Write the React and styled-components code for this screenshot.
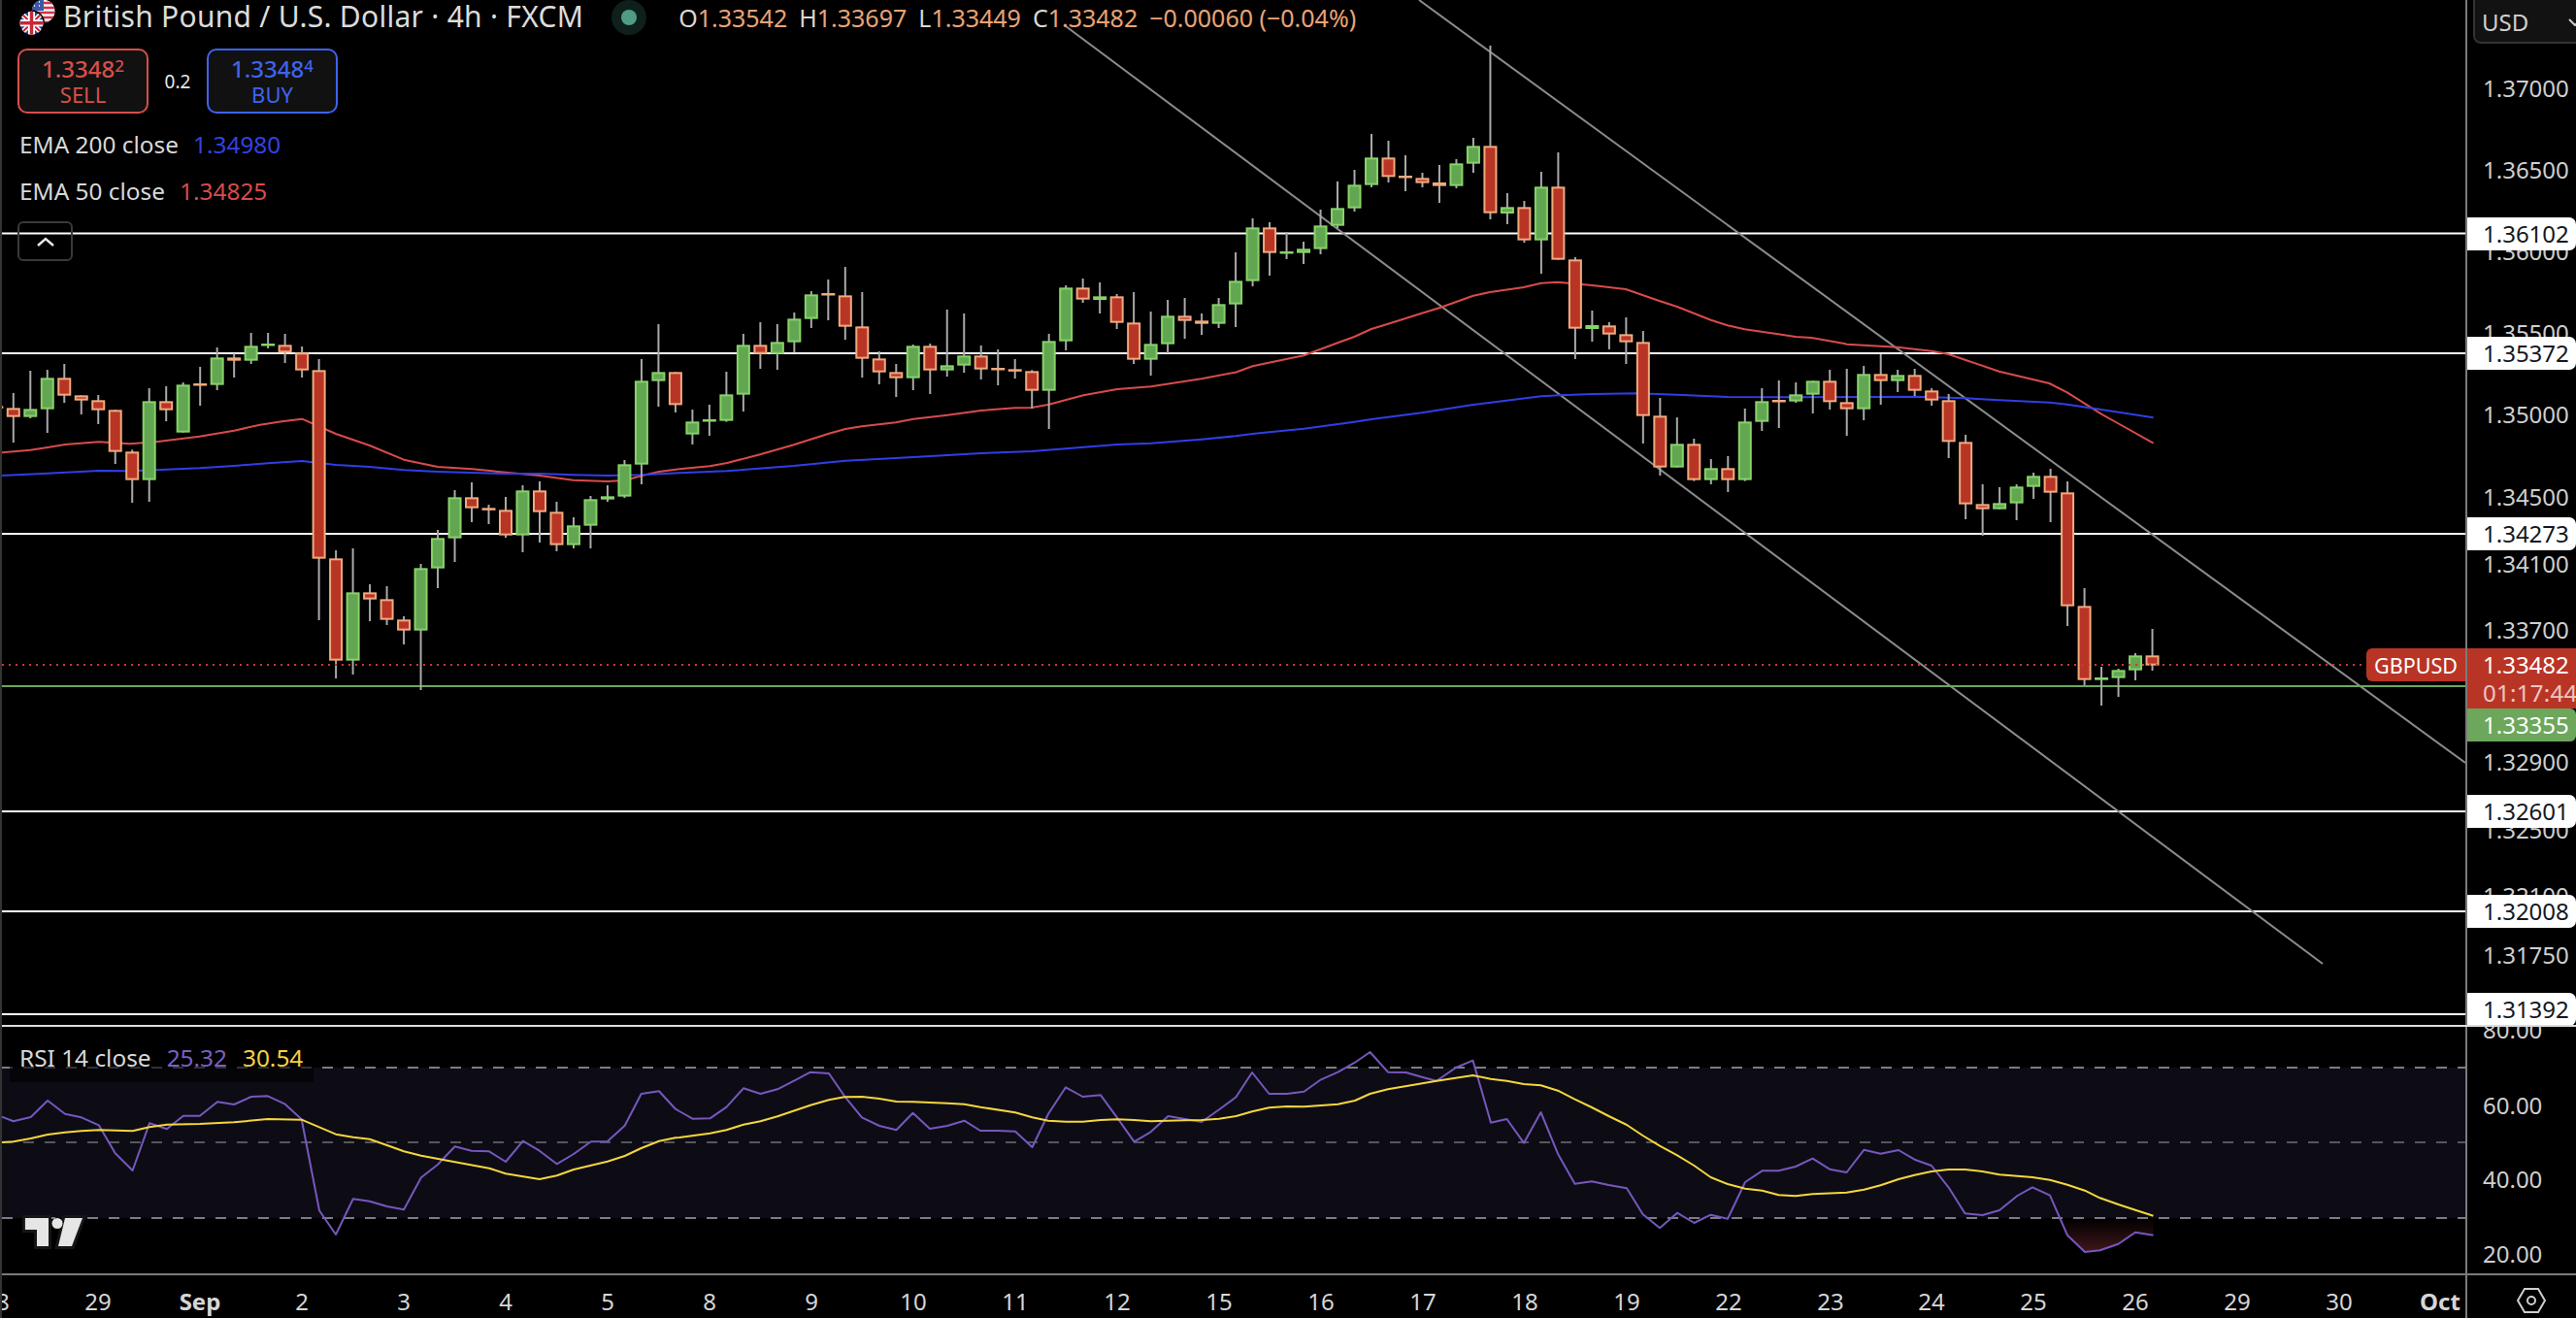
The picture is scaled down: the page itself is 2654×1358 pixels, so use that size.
import React from "react";
import styled, { createGlobalStyle } from "styled-components";

const FONT = `"Noto Sans", "Open Sans", sans-serif`;

const GlobalStyle = createGlobalStyle`
  html, body { margin: 0; padding: 0; background: #000; }
  body { font-family: ${FONT}; }
`;

/* ---------- data: traced from the chart, [wickTop, bodyTop, bodyBottom, wickBottom, up] ---------- */
const seg = (off, rows) => rows.map(([a, b, c, d, u]) => [off + a / 3, off + b / 3, off + c / 3, off + d / 3, u]);
const candles = [
  ...seg(320, [
    [240,295,301,360,0],
    [255,301,329,408,0],[186,304,329,333,1],[183,208,305,378,1],[165,208,263,285,0],[262,262,278,321,0],
    [261,277,308,351,0],[306,307,437,474,0],[430,436,524,594,0],[240,280,524,591,1],[234,280,308,342,0],
    [222,229,377,377,1],[174,225,231,294,0],[114,145,230,246,1],[132,145,155,207,0],[69,109,155,165,1],
    [69,102,107,117,1],[72,106,130,162,0],[111,130,185,207,0],[150,184,767,957,0],[741,766,1082,1137,0],
    [735,871,1082,1125,1],[846,871,893,960,0],[852,892,956,972,0],[945,955,989,1032,0],[783,796,989,1173,1],
    [678,703,797,858,1],[555,577,704,777,1],[531,577,611,654,0],[600,610,617,660,0],[576,616,695,702,0],
    [540,556,695,747,1],[528,556,623,717,0],[591,622,725,744,0],[639,664,725,735,1],[573,583,665,735,1],
    [540,574,584,591,1],[462,475,575,579,1],[150,217,476,537,1],[42,190,218,297,1],[190,190,292,315,0],
  ]),
  ...seg(220, [
    [606,643,683,714,1],[591,636,641,687,1],[489,559,641,644,1],[372,406,560,612,1],[336,406,434,480,0],
    [342,397,434,483,1],[306,325,398,430,1],[240,250,326,354,1],[204,246,251,330,0],[165,253,350,390,0],
    [243,349,449,507,0],[426,448,491,528,0],[465,490,509,567,0],[405,409,509,546,1],[402,409,485,558,0],
    [297,469,485,504,1],[309,439,470,492,1],[408,439,482,513,0],[420,477,483,531,0],[450,481,485,510,0],
    [484,487,548,603,0],[372,394,548,666,1],[222,229,395,423,1],[201,229,266,276,0],[213,256,267,309,1],
    [249,256,338,357,0],[243,337,452,465,0],[303,403,452,501,1],[267,316,404,432,1],[261,316,332,387,0],
    [309,331,341,375,0],[261,280,341,354,1],[120,208,281,351,1],[15,43,209,225,1],
  ]),
  ...seg(30, [
    [597,613,692,762,0],[627,687,692,711,1],[657,679,692,726,1],[558,607,680,696,1],[471,553,608,615,1],
    [435,481,554,564,1],[324,397,482,489,1],[345,397,457,474,0],[390,453,459,501,0],[444,460,476,489,0],
    [420,474,485,537,0],[402,415,485,492,1],[336,361,416,444,1],[51,361,569,588,0],[507,550,570,603,1],
    [531,550,653,660,0],[441,487,653,756,1],[381,487,713,713,0],[705,712,926,1020,0],[870,915,927,966,1],
    [906,916,944,990,0],[891,943,968,1035,0],[933,967,1196,1281,0],
  ]),
  ...seg(350, [
    [180,235,395,420,0],[240,322,395,395,1],[306,322,434,437,0],[369,397,434,447,1],[360,397,434,471,0],
    [213,253,434,437,1],[150,190,254,282,1],[126,186,191,273,0],[132,169,191,195,1],[127,127,170,228,1],
    [93,127,193,216,0],[90,193,215,297,0],[81,106,215,249,1],[45,106,128,201,0],[93,109,128,162,1],
    [90,109,158,174,0],[150,157,188,204,0],[168,187,316,366,0],[294,316,509,555,0],[447,508,524,606,0],
    [456,505,524,524,1],[447,454,506,558,1],[411,421,455,492,1],[399,421,473,564,0],[438,472,824,885,0],
    [768,823,1052,1068,0],[1011,1044,1052,1131,1],[1017,1021,1046,1104,1],[969,976,1022,1053,1],[894,976,1007,1023,0],
  ]),
];
const candleX = (index) => 13.8 + 17.49 * (index - 1);

const trace = (x0, sx, y0, flat) => {
  const out = [];
  for (let i = 0; i < flat.length; i += 2) out.push(`${(x0 + flat[i] / sx).toFixed(1)},${(y0 + flat[i + 1] / 3).toFixed(1)}`);
  return out.join(" ");
};

const ema50 = [
  trace(0, 2.24, 320, [4,439,70,431,110,423,150,414,228,406,300,412,360,406,460,389,540,371,600,353,650,343,697,335,775,381,853,417,932,461,1010,483,1090,490,1167,500,1245,510,1323,524,1402,528,1442,525,1480,511,1521,498,1568,490]),
  trace(700, 2.24, 220, [70,781,110,771,188,744,264,715,345,680,383,666,421,658,499,646,540,635,618,623,696,609,775,601,813,600,853,590,932,562,1010,543,1088,535,1205,511,1283,491,1323,472]),
  trace(1300, 2.613, 30, [0,1036,113,1009,204,970,249,951,295,927,340,911,431,878,478,862,569,824,614,813,705,798,752,785,797,782,890,792,980,804,1070,840,1118,858,1209,899,1254,916,1300,928,1390,943,1437,951,1480,954,1568,972]),
  trace(1700, 2.613, 350, [530,14,666,23,758,35,802,44,850,63,940,98,1075,135,1123,163,1215,230,1259,258,1355,320]),
].join(" ");

const ema200 = [
  trace(0, 2.24, 320, [4,510,110,503,228,495,300,496,385,491,461,487,540,480,618,472,697,465,775,477,853,483,932,493,1010,498,1167,504,1245,504,1323,508,1402,510,1480,508,1568,502]),
  trace(700, 2.24, 220, [110,796,264,780,383,764,499,756,540,753,696,741,813,735,891,727,1010,714,1088,710,1205,698,1283,688,1323,681]),
  trace(1300, 2.613, 30, [0,1248,113,1235,249,1214,295,1206,431,1186,569,1161,752,1135,800,1132,890,1128,1010,1126]),
  trace(1700, 2.613, 350, [0,167,73,170,209,177,392,178,575,177,713,176,850,181,940,187,1076,194,1123,200,1215,216,1355,241]),
].join(" ");

const rsi = [
  trace(0, 2.24, 1040, [4,332,31,346,71,333,110,282,150,323,188,334,228,358,266,445,306,498,345,352,385,370,423,329,461,329,502,286,540,294,580,270,618,268,658,293,696,340,737,622,775,696,815,586,853,593,893,609,932,619,972,520,1010,480,1050,424,1088,437,1129,439,1167,471,1207,407,1245,437,1285,478,1324,447,1364,409,1402,408,1442,359,1480,261,1521,253,1559,308]),
  trace(700, 2, 1060, [0,255,27,278,63,277,97,242,132,184,167,201,202,187,237,160,270,134,308,138,340,208,376,274,412,300,447,313,481,260,516,309,552,300,587,284,620,315,655,315,692,317,727,366,760,263,796,181,831,210,868,205,902,275,937,349,971,319,1007,270,1042,279,1076,288,1112,250,1147,211,1180,135,1215,201,1252,201,1287,194,1322,157,1357,134,1392,104,1423,72,1460,134,1497,135,1530,149]),
  trace(1480, 2, 1060, [0,161,40,120,75,98,112,290,145,279,180,353,215,258,250,386,285,479,320,472,355,483,392,493,425,573,460,616,496,569,531,600,565,575,600,587,636,474,671,439,705,439,740,426,775,401,810,434,845,444,881,374,915,386,952,375,985,404,1020,423,1055,490,1089,571,1125,576,1160,561,1197,516,1228,490,1264,515,1300,638,1336,690,1367,685,1405,665,1440,629,1477,638]),
].join(" ");

const rsiMa = [
  trace(0, 2.24, 1040, [4,411,31,409,71,399,110,387,150,380,188,376,228,373,306,376,345,364,385,356,461,354,540,349,618,339,696,341,775,386,815,395,853,401,893,420,932,439,972,452,1050,472,1129,491,1167,508,1245,525,1285,514,1324,495,1402,470,1442,453,1480,429,1521,407,1559,397]),
  trace(700, 2, 1060, [0,336,63,323,97,313,132,296,167,286,202,271,270,236,308,220,340,211,376,210,412,216,447,225,481,226,552,230,587,233,620,242,692,259,727,274,760,284,796,287,831,287,868,282,902,280,937,282,971,286,1042,283,1076,282,1112,278,1147,270,1180,256,1215,244,1252,240,1287,241,1357,233,1392,222,1423,201,1460,187]),
  trace(1480, 2, 1060, [0,161,75,144,112,155,145,161,180,171,215,175,250,191,285,218,320,243,355,270,392,297,425,330,460,362,496,391,531,423,565,459,600,480,636,494,671,500,705,514,740,517,775,511,845,506,881,497,915,484,952,465,985,452,1020,441,1055,435,1089,435,1125,441,1160,451,1228,459,1264,467,1300,482,1336,500,1367,523,1405,543,1440,560,1477,578]),
].join(" ");

const oversoldFill = trace(1480, 2, 1060, [1285,585,1300,638,1336,690,1367,685,1405,665,1440,629,1477,638,1477,585]);

const levels = [240.5, 364, 550, 836, 939, 1045];
const levelTags = [
  { top: 224, label: "1.36102" }, { top: 347, label: "1.35372" }, { top: 533, label: "1.34273" },
  { top: 819, label: "1.32601" }, { top: 922, label: "1.32008" }, { top: 1023, label: "1.31392" },
];
const priceTicks = [
  [91, "1.37000"], [175, "1.36500"], [259, "1.36000"], [343, "1.35500"], [427, "1.35000"], [512, "1.34500"],
  [581, "1.34100"], [649, "1.33700"], [785, "1.32900"], [855, "1.32500"], [923, "1.32100"], [984, "1.31750"],
];
const rsiTicks = [[3, "80.00"], [81, "60.00"], [157, "40.00"], [234, "20.00"]];
const dates = [
  [-4, "28"], [101, "29"], [206, "Sep", 1], [311, "2"], [416, "3"], [521, "4"], [626, "5"], [731, "8"], [836, "9"],
  [941, "10"], [1046, "11"], [1151, "12"], [1256, "15"], [1361, "16"], [1466, "17"], [1571, "18"], [1676, "19"],
  [1781, "22"], [1886, "23"], [1990, "24"], [2095, "25"], [2200, "26"], [2305, "29"], [2410, "30"], [2514, "Oct", 1],
];

/* ---------- layout ---------- */
const Page = styled.div`
  width: 2654px;
  height: 1358px;
  box-sizing: border-box;
  border-left: 2px solid #333;
  background: #000;
  overflow: hidden;
  display: grid;
  grid-template-columns: 2538px 2px 112px;
  grid-template-rows: 1056px 2px 254px 2px 44px;
  font-family: ${FONT};
`;
const Pane = styled.div`
  position: relative;
  overflow: hidden;
`;
const VerticalRule = styled.div`
  background: #7b7b7b;
`;
const PaneSeparator = styled.div`
  grid-column: 1 / -1;
  background: #dcdce4;
`;
const TimeRule = styled.div`
  grid-column: 1 / -1;
  background: #7b7b7b;
`;
const Plot = styled.svg`
  display: block;
`;

/* ---------- legend over the chart ---------- */
const Legend = styled.div`
  position: absolute;
  top: 0;
  left: 0;
  padding-left: 16px;
  display: flex;
  flex-direction: column;
  align-items: flex-start;
  color: #d8d8d8;
`;
const TitleRow = styled.div`
  height: 36px;
  display: flex;
  align-items: center;
  white-space: nowrap;
`;
const Flags = styled.svg`
  margin: 0 7px 0 2px;
  flex: none;
`;
const Title = styled.span`
  font-size: 30px;
  line-height: 36px;
  margin-top: -3px;
  letter-spacing: 0.27px;
  color: #dcdcdc;
`;
const StatusHalo = styled.span`
  width: 36px;
  height: 36px;
  margin: 0 33px 0 29px;
  border-radius: 50%;
  background: #0f1f1b;
  display: flex;
  align-items: center;
  justify-content: center;
`;
const StatusDot = styled.span`
  width: 16px;
  height: 16px;
  border-radius: 50%;
  background: #4f9c85;
`;
const Ohlc = styled.span`
  font-size: 25px;
  display: flex;
  gap: 12px;
`;
const OhlcLabel = styled.span`
  color: #d8d8d8;
`;
const OhlcValue = styled.span`
  color: #e9a476;
`;
const TradeRow = styled.div`
  margin-top: 14px;
  display: flex;
  align-items: center;
`;
const TradeButton = styled.div`
  width: 135px;
  height: 67px;
  box-sizing: border-box;
  border: 2px solid ${(p) => p.$color};
  border-radius: 10px;
  background: #111;
  color: ${(p) => p.$color};
  display: flex;
  flex-direction: column;
  align-items: center;
  justify-content: center;
  line-height: 26px;
`;
const TradePrice = styled.span`
  font-size: 24px;
  font-weight: 500;
`;
const Pip = styled.sup`
  font-size: 17px;
  line-height: 0;
  vertical-align: 6px;
`;
const TradeSide = styled.span`
  font-size: 22px;
`;
const Spread = styled.span`
  width: 60px;
  text-align: center;
  font-size: 19px;
  color: #e8e8e8;
`;
const IndicatorRow = styled.div`
  margin: ${(p) => (p.$first ? "16px" : "18px")} 0 0 2px;
  height: 30px;
  display: flex;
  align-items: center;
  gap: 15px;
  font-size: 24.4px;
  white-space: nowrap;
`;
const IndicatorValue = styled.span`
  color: ${(p) => p.$color};
`;
const CollapseButton = styled.div`
  margin-top: 17px;
  width: 57px;
  height: 41px;
  box-sizing: border-box;
  border: 2px solid #3a3a3a;
  border-radius: 6px;
  display: flex;
  align-items: center;
  justify-content: center;
`;
const RsiLegend = styled.div`
  position: absolute;
  top: 9px;
  left: 8px;
  width: 313px;
  height: 48px;
  box-sizing: border-box;
  padding: 0 0 4px 10px;
  background: rgba(0, 0, 0, 0.6);
  display: flex;
  align-items: center;
  gap: 16px;
  font-size: 24.4px;
  color: #d8d8d8;
  white-space: nowrap;
`;
const SymbolTag = styled.div`
  position: absolute;
  right: 0;
  top: 668px;
  width: 102px;
  height: 34px;
  border-radius: 6px 0 0 6px;
  background: #b83526;
  color: #fff;
  font-size: 21.5px;
  display: flex;
  align-items: center;
  justify-content: center;
`;

/* ---------- svg parts ---------- */
const Wick = styled.line`
  stroke: #a9a9a9;
  stroke-width: 2;
`;
const Body = styled.rect`
  fill: ${(p) => (p.$up ? "#63a652" : "#b83526")};
  stroke: ${(p) => (p.$up ? "#86d369" : "#f0aa7d")};
  stroke-width: 2;
`;
const LevelLine = styled.line`
  stroke: #fff;
  stroke-width: 2;
`;
const TrendLine = styled.line`
  stroke: #8c8c8c;
  stroke-width: 2;
`;
const SeriesLine = styled.polyline`
  fill: none;
  stroke: ${(p) => p.$color};
  stroke-width: 2;
  stroke-linejoin: round;
`;
const LastPriceLine = styled.line`
  stroke: #c93a2c;
  stroke-width: 2;
  stroke-dasharray: 2 5;
`;
const SupportLine = styled.line`
  stroke: #6ca75c;
  stroke-width: 2;
`;
const BandLine = styled.line`
  stroke: ${(p) => p.$color};
  stroke-width: 2;
  stroke-dasharray: 11 11;
`;

/* ---------- scales ---------- */
const Scale = styled.div`
  position: relative;
  overflow: hidden;
  background: #000;
  font-size: 24px;
  color: #cfcfcf;
`;
const Tick = styled.span.attrs((p) => ({ style: { top: p.$y } }))`
  position: absolute;
  left: 16px;
  line-height: 34px;
  transform: translateY(-50%);
`;
const LevelTag = styled.div.attrs((p) => ({ style: { top: p.$top } }))`
  position: absolute;
  left: 0;
  right: 0;
  height: 34px;
  padding-left: 16px;
  border-radius: 0 7px 7px 0;
  background: #fff;
  color: #131722;
  line-height: 34px;
`;
const LastPriceBlock = styled.div`
  position: absolute;
  top: 668px;
  left: 0;
  right: 0;
  height: 62px;
  padding-left: 16px;
  background: #b83526;
  color: #fff;
  line-height: 29px;
  display: flex;
  flex-direction: column;
  justify-content: center;
`;
const Countdown = styled.span`
  opacity: 0.72;
  letter-spacing: 0.3px;
`;
const SupportTag = styled.div`
  position: absolute;
  top: 730px;
  left: 0;
  right: 0;
  height: 34px;
  padding-left: 16px;
  border-radius: 0 6px 6px 0;
  background: #6ca75c;
  color: #fff;
  line-height: 34px;
`;
const CurrencyButton = styled.div`
  position: absolute;
  top: -2px;
  left: 6px;
  width: 120px;
  height: 47px;
  box-sizing: border-box;
  padding: 2px 0 0 7px;
  border: 2px solid #333;
  border-radius: 0 0 0 8px;
  background: #121212;
  color: #cfcfcf;
  display: flex;
  align-items: center;
  gap: 41px;
`;
const TimeAxis = styled.div`
  position: relative;
  overflow: hidden;
  font-size: 24px;
  color: #d6d6d6;
`;
const DateLabel = styled.span.attrs((p) => ({ style: { left: p.$x } }))`
  position: absolute;
  top: 0;
  line-height: 54px;
  transform: translateX(-50%);
  font-weight: ${(p) => (p.$bold ? 700 : 400)};
`;
const Corner = styled.div`
  display: flex;
  align-items: center;
  justify-content: center;
  padding: 8px 0 0 20px;
`;

const GbFlag = () => (
  <g clipPath="url(#gbClip)">
    <circle cx="12.5" cy="23.7" r="12" fill="#2a4b9b" />
    <path d="M0 12 L25 36 M25 12 L0 36" stroke="#fff" strokeWidth="5" />
    <path d="M0 12 L25 36 M25 12 L0 36" stroke="#c8283a" strokeWidth="2" />
    <path d="M12.5 10 V38 M0 23.7 H25" stroke="#fff" strokeWidth="7" />
    <path d="M12.5 10 V38 M0 23.7 H25" stroke="#c8283a" strokeWidth="3.5" />
  </g>
);

const UsFlag = () => (
  <g clipPath="url(#usClip)">
    <circle cx="24.7" cy="11.5" r="12" fill="#f4f4f4" />
    <path d="M12 3 H38 M12 8 H38 M12 13 H38 M12 18 H38 M12 23 H38" stroke="#d0344a" strokeWidth="2.6" />
    <rect x="12" y="-1" width="13" height="12" fill="#3b5aa8" />
    <path d="M15 2 h1 M20 2 h1 M15 6 h1 M20 6 h1" stroke="#fff" strokeWidth="1.5" />
  </g>
);

export default function App() {
  return (
    <>
      <GlobalStyle />
      <Page>
        <Pane>
          <Plot width="2538" height="1056" viewBox="2 0 2538 1056">
            {levels.map((y) => (
              <LevelLine key={y} x1="2" x2="2540" y1={y} y2={y} />
            ))}
            <TrendLine x1="1462" y1="0" x2="2540" y2="786" />
            <TrendLine x1="1098" y1="27" x2="2393" y2="993" />
            <SeriesLine $color="#d94b4b" points={ema50} />
            <SeriesLine $color="#2f3fe6" points={ema200} />
            <SupportLine x1="2" x2="2540" y1="707" y2="707" />
            {candles.map(([top, bodyTop, bodyBottom, bottom, up], i) => {
              const x = candleX(i);
              return (
                <g key={i}>
                  <Wick x1={x} x2={x} y1={top} y2={bottom} />
                  <Body
                    $up={up}
                    x={x - 6}
                    y={bodyTop + 1}
                    width="12"
                    height={Math.max(bodyBottom - bodyTop - 2, 0.5)}
                  />
                </g>
              );
            })}
            <LastPriceLine x1="2" x2="2434" y1="685" y2="685" />
          </Plot>
          <Legend>
            <TitleRow>
              <Flags width="38" height="36" viewBox="0 0 38 36">
                <defs>
                  <clipPath id="gbClip">
                    <circle cx="12.5" cy="23.7" r="12" />
                  </clipPath>
                  <clipPath id="usClip">
                    <circle cx="24.7" cy="11.5" r="12" />
                  </clipPath>
                </defs>
                <UsFlag />
                <circle cx="12.5" cy="23.7" r="13.5" fill="#000" />
                <GbFlag />
              </Flags>
              <Title>British Pound / U.S. Dollar · 4h · FXCM</Title>
              <StatusHalo>
                <StatusDot />
              </StatusHalo>
              <Ohlc>
                <span><OhlcLabel>O</OhlcLabel><OhlcValue>1.33542</OhlcValue></span>
                <span><OhlcLabel>H</OhlcLabel><OhlcValue>1.33697</OhlcValue></span>
                <span><OhlcLabel>L</OhlcLabel><OhlcValue>1.33449</OhlcValue></span>
                <span><OhlcLabel>C</OhlcLabel><OhlcValue>1.33482</OhlcValue></span>
                <OhlcValue>−0.00060 (−0.04%)</OhlcValue>
              </Ohlc>
            </TitleRow>
            <TradeRow>
              <TradeButton $color="#d84f4a">
                <TradePrice>1.3348<Pip>2</Pip></TradePrice>
                <TradeSide>SELL</TradeSide>
              </TradeButton>
              <Spread>0.2</Spread>
              <TradeButton $color="#3e63ee">
                <TradePrice>1.3348<Pip>4</Pip></TradePrice>
                <TradeSide>BUY</TradeSide>
              </TradeButton>
            </TradeRow>
            <IndicatorRow $first>
              EMA 200 close <IndicatorValue $color="#3243e0">1.34980</IndicatorValue>
            </IndicatorRow>
            <IndicatorRow>
              EMA 50 close <IndicatorValue $color="#d94b4b">1.34825</IndicatorValue>
            </IndicatorRow>
            <CollapseButton>
              <svg width="20" height="10" viewBox="0 0 20 10">
                <path d="M2 9 L10 2 L18 9" fill="none" stroke="#e8e8e8" strokeWidth="2.4" />
              </svg>
            </CollapseButton>
          </Legend>
          <SymbolTag>GBPUSD</SymbolTag>
        </Pane>
        <VerticalRule />
        <Scale>
          {priceTicks.map(([y, label]) => (
            <Tick key={label} $y={y}>{label}</Tick>
          ))}
          {levelTags.map((tag) => (
            <LevelTag key={tag.label} $top={tag.top}>{tag.label}</LevelTag>
          ))}
          <LastPriceBlock>
            1.33482
            <Countdown>01:17:44</Countdown>
          </LastPriceBlock>
          <SupportTag>1.33355</SupportTag>
          <CurrencyButton>
            USD
            <svg width="14" height="8" viewBox="0 0 14 8">
              <path d="M1 1 L7 7 L13 1" fill="none" stroke="#cfcfcf" strokeWidth="2" />
            </svg>
          </CurrencyButton>
        </Scale>

        <PaneSeparator />

        <Pane>
          <Plot width="2538" height="254" viewBox="2 1058 2538 254">
            <defs>
              <linearGradient id="oversold" gradientUnits="userSpaceOnUse" x1="0" y1="1255" x2="0" y2="1290">
                <stop offset="0" stopColor="#3f161a" stopOpacity="0" />
                <stop offset="1" stopColor="#42161b" />
              </linearGradient>
            </defs>
            <rect x="2" y="1100" width="2538" height="155" fill="#0d0c15" />
            <BandLine $color="#7b7c86" x1="2" x2="2540" y1="1100" y2="1100" />
            <BandLine $color="#55565e" x1="2" x2="2540" y1="1177" y2="1177" />
            <BandLine $color="#7b7c86" x1="2" x2="2540" y1="1255" y2="1255" />
            <polygon points={oversoldFill} fill="url(#oversold)" />
            <SeriesLine $color="#7657be" points={rsi} />
            <SeriesLine $color="#f5d63d" points={rsiMa} />
            <g>
              <path
                d="M25.9 1255 H50 V1284 H38 V1267 H25.9 Z M67 1255 H85 L74 1284 H60 Z"
                fill="#e6e6e6"
                stroke="#161616"
                strokeWidth="6"
                paintOrder="stroke"
              />
              <circle cx="59" cy="1260.5" r="5.5" fill="#e6e6e6" />
            </g>
          </Plot>
          <RsiLegend>
            RSI 14 close
            <IndicatorValue $color="#7c5fc0">25.32</IndicatorValue>
            <IndicatorValue $color="#f5d040">30.54</IndicatorValue>
          </RsiLegend>
        </Pane>
        <VerticalRule />
        <Scale>
          {rsiTicks.map(([y, label]) => (
            <Tick key={label} $y={y}>{label}</Tick>
          ))}
        </Scale>

        <TimeRule />

        <TimeAxis>
          {dates.map(([x, label, bold]) => (
            <DateLabel key={`${x}`} $x={x - 2} $bold={bold}>{label}</DateLabel>
          ))}
        </TimeAxis>
        <VerticalRule />
        <Corner>
          <svg width="30" height="26" viewBox="0 0 30 26">
            <path d="M1 13 L8 1 H22 L29 13 L22 25 H8 Z" fill="none" stroke="#cfcfcf" strokeWidth="2" />
            <circle cx="15" cy="13" r="4" fill="none" stroke="#cfcfcf" strokeWidth="2" />
          </svg>
        </Corner>
      </Page>
    </>
  );
}
